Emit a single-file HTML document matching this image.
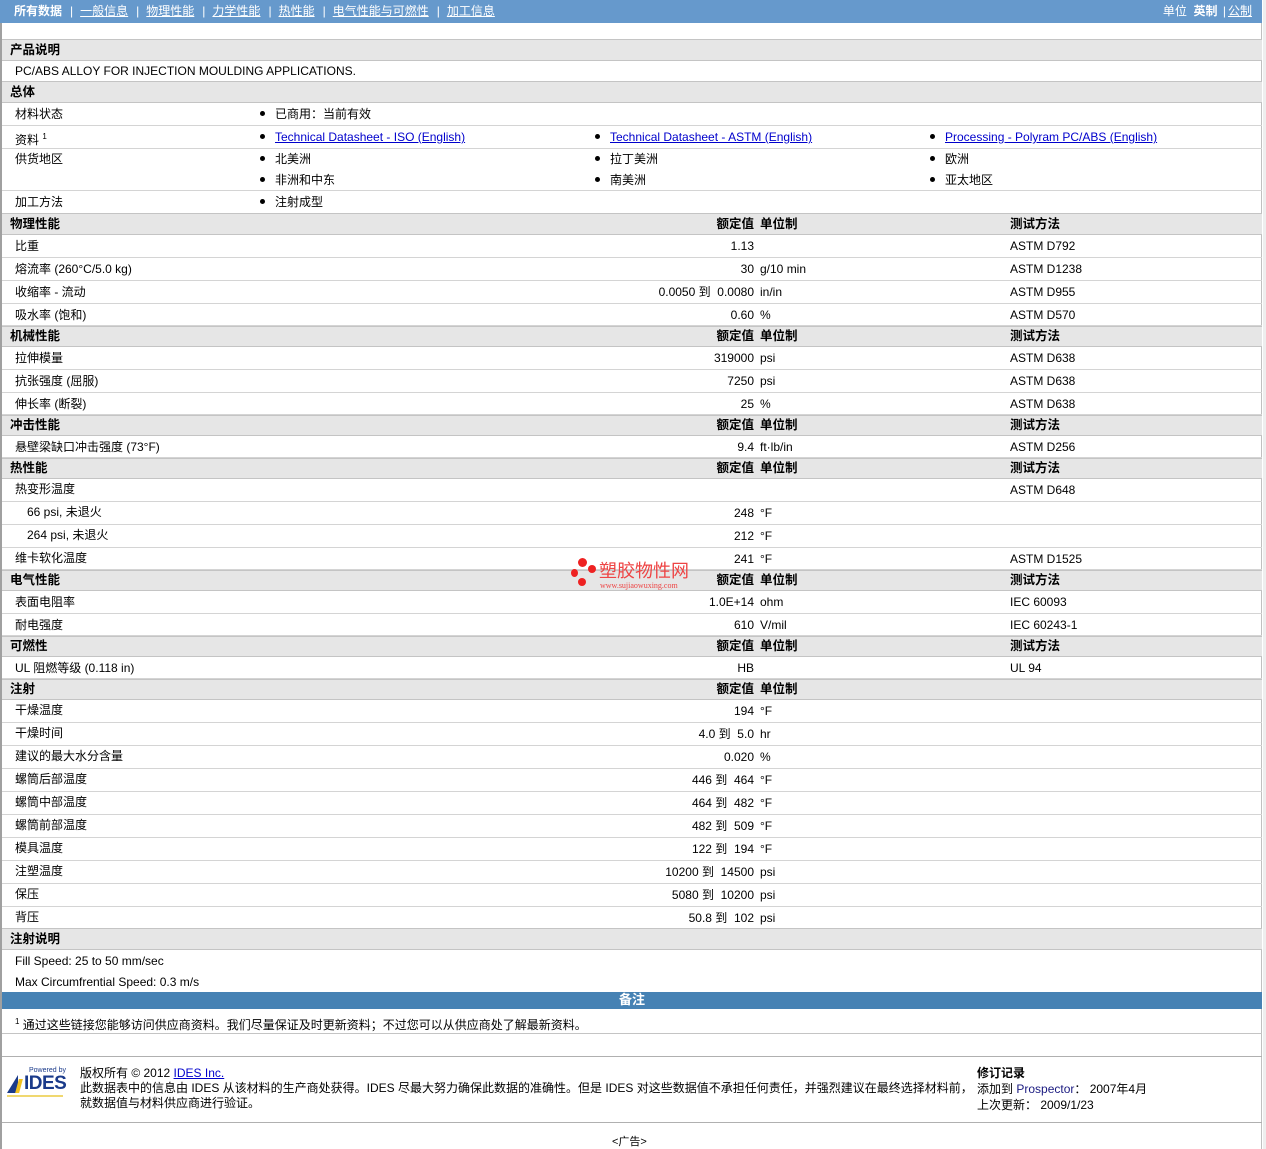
<!DOCTYPE html>
<html><head><meta charset="utf-8"><style>
*{margin:0;padding:0;box-sizing:border-box}
body{width:1266px;height:1149px;position:relative;background:#fff;font-family:"Liberation Sans","Noto Sans CJK SC",sans-serif;font-size:12px;color:#000;overflow:hidden}
.frame{position:absolute;left:0;top:0;width:1262px;height:1149px;border-left:2px solid #a0a0a0;border-right:1px solid #c0c0c0}
.sb{position:absolute;left:1263px;top:0;width:3px;height:1149px;background:#eee}
.nav{position:absolute;left:0;top:0;width:1262px;height:23px;background:#6699cc;color:#fff;font-size:12px;line-height:22px;padding-left:14px}
.nav a{color:#fff;text-decoration:underline}
.nav b{font-weight:bold}
.nav .sep{margin:0 7px 0 8px}
.r{position:absolute;left:2px;width:1260px;border-bottom:1px solid #d4d4d4}
.h{background:#e6e6e6;border-top:1px solid #c4c4c4;border-bottom:1px solid #c4c4c4;font-weight:bold;font-size:12.5px}
.r span{position:absolute;white-space:nowrap}
.l{left:13px}.hl{left:8px}
.v{right:508px;text-align:right}
.u{left:758px}
.m{left:1008px}
.c1{left:258px}.c2{left:593px}.c3{left:928px}
.dot{display:inline-block;width:5px;height:5px;border-radius:50%;background:#000;margin-right:10px;vertical-align:2px}
a{color:#00c;text-decoration:underline}
.bar{position:absolute;left:2px;top:992px;width:1260px;height:17px;background:#4682b4;color:#fff;font-weight:bold;text-align:center;line-height:16px;font-size:13px}
</style></head><body>
<div class="frame"></div><div class="sb"></div>
<div class="nav"><b>所有数据</b><span class="sep">|</span><a>一般信息</a><span class="sep">|</span><a>物理性能</a><span class="sep">|</span><a>力学性能</a><span class="sep">|</span><a>热性能</a><span class="sep">|</span><a>电气性能与可燃性</a><span class="sep">|</span><a>加工信息</a>
<span style="position:absolute;right:10px;top:0">单位 &nbsp;<b>英制</b> <span style="margin:0 2px">|</span><a>公制</a></span></div>

<div class="r h" style="top:39px;height:22px;line-height:20px"><span class="hl">产品说明</span></div>
<div class="r" style="top:61px;height:21px;line-height:21px"><span class="l">PC/ABS ALLOY FOR INJECTION MOULDING APPLICATIONS.</span></div>
<div class="r h" style="top:81px;height:22px;line-height:20px"><span class="hl">总体</span></div>
<div class="r" style="top:103px;height:23px;line-height:22px"><span class="l">材料状态</span><span class="c1"><i class="dot"></i>已商用：当前有效</span></div>
<div class="r" style="top:126px;height:23px;line-height:22px"><span class="l">资料 <sup style="font-size:8px">1</sup></span><span class="c1"><i class="dot"></i><a>Technical Datasheet - ISO (English)</a></span><span class="c2"><i class="dot"></i><a>Technical Datasheet - ASTM (English)</a></span><span class="c3"><i class="dot"></i><a>Processing - Polyram PC/ABS (English)</a></span></div>
<div class="r" style="top:149px;height:42px;line-height:21px"><span class="l">供货地区</span><span class="c1"><i class="dot"></i>北美洲<br><i class="dot"></i>非洲和中东</span><span class="c2"><i class="dot"></i>拉丁美洲<br><i class="dot"></i>南美洲</span><span class="c3"><i class="dot"></i>欧洲<br><i class="dot"></i>亚太地区</span></div>
<div class="r" style="top:191px;height:23px;line-height:23px;border-bottom:none"><span class="l">加工方法</span><span class="c1"><i class="dot"></i>注射成型</span></div>

<div class="r h" style="top:213px;height:22px;line-height:20px"><span class="hl">物理性能</span><span class="v">额定值</span><span class="u">单位制</span><span class="m">测试方法</span></div>
<div class="r" style="top:235px;height:23px;line-height:23px"><span class="l">比重</span><span class="v">1.13</span><span class="m">ASTM D792</span></div>
<div class="r" style="top:258px;height:23px;line-height:23px"><span class="l">熔流率 (260°C/5.0 kg)</span><span class="v">30</span><span class="u">g/10 min</span><span class="m">ASTM D1238</span></div>
<div class="r" style="top:281px;height:23px;line-height:23px"><span class="l">收缩率 - 流动</span><span class="v">0.0050 到&nbsp; 0.0080</span><span class="u">in/in</span><span class="m">ASTM D955</span></div>
<div class="r" style="top:304px;height:22px;line-height:23px"><span class="l">吸水率 (饱和)</span><span class="v">0.60</span><span class="u">%</span><span class="m">ASTM D570</span></div>
<div class="r h" style="top:326px;height:21px;line-height:19px"><span class="hl">机械性能</span><span class="v">额定值</span><span class="u">单位制</span><span class="m">测试方法</span></div>
<div class="r" style="top:347px;height:23px;line-height:23px"><span class="l">拉伸模量</span><span class="v">319000</span><span class="u">psi</span><span class="m">ASTM D638</span></div>
<div class="r" style="top:370px;height:23px;line-height:23px"><span class="l">抗张强度 (屈服)</span><span class="v">7250</span><span class="u">psi</span><span class="m">ASTM D638</span></div>
<div class="r" style="top:393px;height:22px;line-height:23px"><span class="l">伸长率 (断裂)</span><span class="v">25</span><span class="u">%</span><span class="m">ASTM D638</span></div>
<div class="r h" style="top:415px;height:21px;line-height:19px"><span class="hl">冲击性能</span><span class="v">额定值</span><span class="u">单位制</span><span class="m">测试方法</span></div>
<div class="r" style="top:436px;height:22px;line-height:22px"><span class="l">悬壁梁缺口冲击强度 (73°F)</span><span class="v">9.4</span><span class="u">ft·lb/in</span><span class="m">ASTM D256</span></div>
<div class="r h" style="top:458px;height:21px;line-height:19px"><span class="hl">热性能</span><span class="v">额定值</span><span class="u">单位制</span><span class="m">测试方法</span></div>
<div class="r" style="top:479px;height:23px;line-height:20px"><span class="l">热变形温度</span><span class="m" style="line-height:23px">ASTM D648</span></div>
<div class="r" style="top:502px;height:23px;line-height:21px"><span class="l" style="left:25px">66 psi, 未退火</span><span class="v" style="line-height:23px">248</span><span class="u" style="line-height:23px">°F</span></div>
<div class="r" style="top:525px;height:23px;line-height:21px"><span class="l" style="left:25px">264 psi, 未退火</span><span class="v" style="line-height:23px">212</span><span class="u" style="line-height:23px">°F</span></div>
<div class="r" style="top:548px;height:22px;line-height:21px"><span class="l">维卡软化温度</span><span class="v" style="line-height:23px">241</span><span class="u" style="line-height:23px">°F</span><span class="m" style="line-height:23px">ASTM D1525</span></div>
<div class="r h" style="top:570px;height:21px;line-height:19px"><span class="hl">电气性能</span><span class="v">额定值</span><span class="u">单位制</span><span class="m">测试方法</span></div>
<div class="r" style="top:591px;height:23px;line-height:22px"><span class="l">表面电阻率</span><span class="v">1.0E+14</span><span class="u">ohm</span><span class="m">IEC 60093</span></div>
<div class="r" style="top:614px;height:22px;line-height:22px"><span class="l">耐电强度</span><span class="v">610</span><span class="u">V/mil</span><span class="m">IEC 60243-1</span></div>
<div class="r h" style="top:636px;height:21px;line-height:19px"><span class="hl">可燃性</span><span class="v">额定值</span><span class="u">单位制</span><span class="m">测试方法</span></div>
<div class="r" style="top:657px;height:22px;line-height:22px"><span class="l">UL 阻燃等级 (0.118 in)</span><span class="v">HB</span><span class="m">UL 94</span></div>
<div class="r h" style="top:679px;height:21px;line-height:19px"><span class="hl">注射</span><span class="v">额定值</span><span class="u">单位制</span></div>
<div class="r" style="top:700px;height:23px;line-height:21px"><span class="l">干燥温度</span><span class="v" style="line-height:23px">194</span><span class="u" style="line-height:23px">°F</span></div>
<div class="r" style="top:723px;height:23px;line-height:21px"><span class="l">干燥时间</span><span class="v" style="line-height:23px">4.0 到&nbsp; 5.0</span><span class="u" style="line-height:23px">hr</span></div>
<div class="r" style="top:746px;height:23px;line-height:21px"><span class="l">建议的最大水分含量</span><span class="v" style="line-height:23px">0.020</span><span class="u" style="line-height:23px">%</span></div>
<div class="r" style="top:769px;height:23px;line-height:21px"><span class="l">螺筒后部温度</span><span class="v" style="line-height:23px">446 到&nbsp; 464</span><span class="u" style="line-height:23px">°F</span></div>
<div class="r" style="top:792px;height:23px;line-height:21px"><span class="l">螺筒中部温度</span><span class="v" style="line-height:23px">464 到&nbsp; 482</span><span class="u" style="line-height:23px">°F</span></div>
<div class="r" style="top:815px;height:23px;line-height:21px"><span class="l">螺筒前部温度</span><span class="v" style="line-height:23px">482 到&nbsp; 509</span><span class="u" style="line-height:23px">°F</span></div>
<div class="r" style="top:838px;height:23px;line-height:21px"><span class="l">模具温度</span><span class="v" style="line-height:23px">122 到&nbsp; 194</span><span class="u" style="line-height:23px">°F</span></div>
<div class="r" style="top:861px;height:23px;line-height:21px"><span class="l">注塑温度</span><span class="v" style="line-height:23px">10200 到&nbsp; 14500</span><span class="u" style="line-height:23px">psi</span></div>
<div class="r" style="top:884px;height:23px;line-height:21px"><span class="l">保压</span><span class="v" style="line-height:23px">5080 到&nbsp; 10200</span><span class="u" style="line-height:23px">psi</span></div>
<div class="r" style="top:907px;height:22px;line-height:21px"><span class="l">背压</span><span class="v" style="line-height:23px">50.8 到&nbsp; 102</span><span class="u" style="line-height:23px">psi</span></div>
<div class="r h" style="top:928px;height:22px;line-height:20px"><span class="hl">注射说明</span></div>
<div class="r" style="top:950px;height:42px;line-height:21px;border:none"><span class="l" style="top:1px">Fill Speed: 25 to 50 mm/sec<br>Max Circumfrential Speed: 0.3 m/s</span></div>
<div class="bar">备注</div>
<div class="r" style="top:1009px;height:25px;line-height:26px;border-bottom:1px solid #c4c4c4"><span class="l"><sup style="font-size:8px">1</sup> 通过这些链接您能够访问供应商资料。我们尽量保证及时更新资料；不过您可以从供应商处了解最新资料。</span></div>
<div class="r" style="top:1034px;height:23px;border-bottom:1px solid #b0b0b0"></div>

<div style="position:absolute;left:570px;top:557px;width:28px;height:34px">
<div style="position:absolute;left:8px;top:1px;width:9px;height:9px;border-radius:50%;background:#e22"></div>
<div style="position:absolute;left:18px;top:8px;width:8px;height:8px;border-radius:50%;background:#e22"></div>
<div style="position:absolute;left:1px;top:12px;width:7px;height:8px;border-radius:50%;background:#e22"></div>
<div style="position:absolute;left:8px;top:21px;width:8px;height:8px;border-radius:50%;background:#e22"></div>
</div>
<div style="position:absolute;left:599px;top:561px;color:#e44;font-size:18px;line-height:20px">塑胶物性网</div>
<div style="position:absolute;left:600px;top:581px;color:#e44;font-size:8px;font-family:'Liberation Serif',serif">www.sujiaowuxing.com</div>

<div style="position:absolute;left:7px;top:1067px;width:64px;height:32px">
<div style="position:absolute;left:22px;top:0;font-size:7px;line-height:8px;color:#1a3a8a">Powered by</div>
<div style="position:absolute;left:0;top:8px;width:0;height:0;border-left:11px solid transparent;border-bottom:18px solid #1a3a8a"></div>
<div style="position:absolute;left:10px;top:12px;width:4px;height:14px;background:#f0c020;transform:skewX(-15deg)"></div>
<div style="position:absolute;left:17px;top:7px;font-size:19px;line-height:20px;font-weight:bold;color:#1a3a8a;letter-spacing:-0.5px">IDES</div>
<div style="position:absolute;left:0;top:28px;width:56px;height:2px;background:#f0d870"></div>
</div>
<div style="position:absolute;left:80px;top:1066px;line-height:15px">版权所有 © 2012 <a>IDES Inc.</a><br>此数据表中的信息由 IDES 从该材料的生产商处获得。IDES 尽最大努力确保此数据的准确性。但是 IDES 对这些数据值不承担任何责任，并强烈建议在最终选择材料前，<br>就数据值与材料供应商进行验证。</div>
<div style="position:absolute;left:977px;top:1065px;line-height:16px"><b>修订记录</b><br>添加到 <span style="color:#1a1a80">Prospector</span>： 2007年4月<br>上次更新： 2009/1/23</div>
<div style="position:absolute;left:2px;top:1122px;width:1260px;border-top:1px solid #b0b0b0"></div>
<div style="position:absolute;left:612px;top:1133px;font-size:11px">&lt;广告&gt;</div>
</body></html>
